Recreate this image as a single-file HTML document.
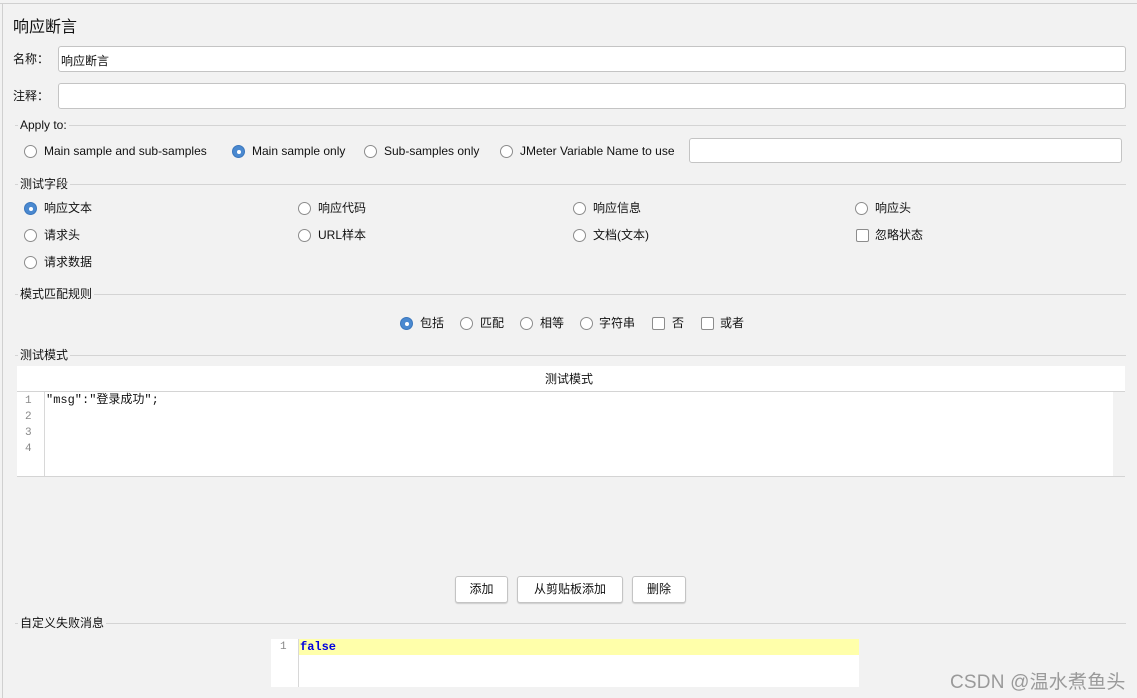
<!DOCTYPE html>
<html><head><meta charset="utf-8"><style>
body{margin:0;width:1137px;height:698px;background:#f2f2f2;position:relative;overflow:hidden;font-family:"Liberation Sans","Noto Sans CJK SC",sans-serif;font-size:12px;color:#111}
.a{position:absolute;white-space:nowrap}
.t{position:absolute;white-space:nowrap;line-height:14px}
.r{position:absolute;width:13px;height:13px;border:1px solid #8c8c8c;border-radius:50%;background:#fff;box-sizing:border-box}
.r.on{background:#4a89d0;border-color:#3b77bd}
.r.on:after{content:"";position:absolute;left:3.5px;top:3.5px;width:4px;height:4px;border-radius:50%;background:#fff}
.c{position:absolute;width:13px;height:13px;border:1px solid #8c8c8c;border-radius:2px;background:#fff;box-sizing:border-box}
.in{position:absolute;background:#fff;border:1px solid #c4c4c4;border-radius:3px;box-sizing:border-box}
.hl{position:absolute;height:1px;background:#d4d4d4}
.btn{position:absolute;top:576px;height:27px;background:#fff;border:1px solid #c4c4c4;border-radius:3px;box-sizing:border-box;text-align:center;line-height:25px;box-shadow:0 1px 1px #ccc}
.mono{font-family:"Liberation Mono","Noto Sans CJK SC",monospace;font-size:12px}
</style></head><body>
<div class="a" style="left:0;top:3px;width:1137px;height:1px;background:#d0d0d0"></div>
<div class="a" style="left:2px;top:3px;width:1px;height:695px;background:#d0d0d0"></div>
<div class="a" style="left:13px;top:13px;font-size:16px">响应断言</div>
<div class="t" style="left:13px;top:52px">名称：</div>
<div class="in" style="left:58px;top:46px;width:1068px;height:26px"><span class="a" style="left:2px;top:5px">响应断言</span></div>
<div class="t" style="left:13px;top:89px">注释：</div>
<div class="in" style="left:58px;top:83px;width:1068px;height:26px"></div>

<div class="hl" style="left:15px;top:125px;width:1111px"></div>
<div class="t" style="left:18px;top:118px;background:#f2f2f2;padding:0 2px">Apply to:</div>
<div class="r" style="left:24px;top:145px"></div><div class="t" style="left:44px;top:144px">Main sample and sub-samples</div>
<div class="r on" style="left:232px;top:145px"></div><div class="t" style="left:252px;top:144px">Main sample only</div>
<div class="r" style="left:364px;top:145px"></div><div class="t" style="left:384px;top:144px">Sub-samples only</div>
<div class="r" style="left:500px;top:145px"></div><div class="t" style="left:520px;top:144px">JMeter Variable Name to use</div>
<div class="in" style="left:689px;top:138px;width:433px;height:25px"></div>

<div class="hl" style="left:15px;top:184px;width:1111px"></div>
<div class="t" style="left:18px;top:177px;background:#f2f2f2;padding:0 2px">测试字段</div>
<div class="r on" style="left:24px;top:202px"></div><div class="t" style="left:44px;top:201px">响应文本</div>
<div class="r" style="left:298px;top:202px"></div><div class="t" style="left:318px;top:201px">响应代码</div>
<div class="r" style="left:573px;top:202px"></div><div class="t" style="left:593px;top:201px">响应信息</div>
<div class="r" style="left:855px;top:202px"></div><div class="t" style="left:875px;top:201px">响应头</div>
<div class="r" style="left:24px;top:229px"></div><div class="t" style="left:44px;top:228px">请求头</div>
<div class="r" style="left:298px;top:229px"></div><div class="t" style="left:318px;top:228px">URL样本</div>
<div class="r" style="left:573px;top:229px"></div><div class="t" style="left:593px;top:228px">文档(文本)</div>
<div class="c" style="left:856px;top:229px"></div><div class="t" style="left:875px;top:228px">忽略状态</div>
<div class="r" style="left:24px;top:256px"></div><div class="t" style="left:44px;top:255px">请求数据</div>

<div class="hl" style="left:15px;top:294px;width:1111px"></div>
<div class="t" style="left:18px;top:287px;background:#f2f2f2;padding:0 2px">模式匹配规则</div>
<div class="r on" style="left:400px;top:317px"></div><div class="t" style="left:420px;top:316px">包括</div>
<div class="r" style="left:460px;top:317px"></div><div class="t" style="left:480px;top:316px">匹配</div>
<div class="r" style="left:520px;top:317px"></div><div class="t" style="left:540px;top:316px">相等</div>
<div class="r" style="left:580px;top:317px"></div><div class="t" style="left:599px;top:316px">字符串</div>
<div class="c" style="left:652px;top:317px"></div><div class="t" style="left:672px;top:316px">否</div>
<div class="c" style="left:701px;top:317px"></div><div class="t" style="left:720px;top:316px">或者</div>

<div class="hl" style="left:15px;top:355px;width:1111px"></div>
<div class="t" style="left:18px;top:348px;background:#f2f2f2;padding:0 2px">测试模式</div>
<div class="a" style="left:17px;top:366px;width:1108px;height:25px;background:#fff;border-bottom:1px solid #d4d4d4"></div>
<div class="t" style="left:545px;top:372px">测试模式</div>
<div class="a" style="left:17px;top:392px;width:1096px;height:84px;background:#fff"></div>
<div class="a" style="left:44px;top:392px;width:1px;height:84px;background:#d8d8d8"></div>
<div class="a" style="left:17px;top:476px;width:1108px;height:1px;background:#d4d4d4"></div>
<div class="a mono" style="left:25px;top:393px;line-height:16px;color:#888;font-size:11px">1<br>2<br>3<br>4</div>
<div class="a mono" style="left:46px;top:392px;line-height:16px">"msg":"登录成功";</div>

<div class="btn" style="left:455px;width:53px">添加</div>
<div class="btn" style="left:517px;width:106px">从剪贴板添加</div>
<div class="btn" style="left:632px;width:54px">删除</div>

<div class="hl" style="left:15px;top:623px;width:1111px"></div>
<div class="t" style="left:18px;top:616px;background:#f2f2f2;padding:0 2px">自定义失败消息</div>
<div class="a" style="left:271px;top:639px;width:588px;height:48px;background:#fff"></div>
<div class="a" style="left:299px;top:639px;width:560px;height:16px;background:#ffffaa"></div>
<div class="a" style="left:298px;top:639px;width:1px;height:48px;background:#d8d8d8"></div>
<div class="a mono" style="left:280px;top:640px;line-height:14px;color:#888;font-size:11px">1</div>
<div class="a mono" style="left:300px;top:639px;line-height:16px;color:#0000e0;font-weight:bold">false</div>

<div class="a" style="left:950px;top:667px;font-size:19px;color:#9a9a9a;letter-spacing:0.2px">CSDN @温水煮鱼头</div>
</body></html>
